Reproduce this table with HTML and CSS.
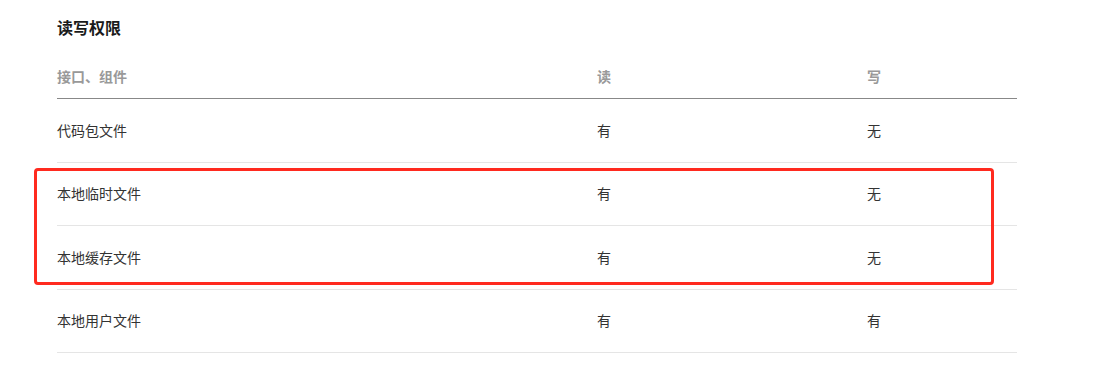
FILE: index.html
```html
<!DOCTYPE html>
<html lang="zh-CN">
<head>
<meta charset="utf-8">
<link rel="stylesheet" href="styles.css">
</head>
<body>
<div class="page">
  <h3 class="title">读写权限</h3>
  <table class="perm">
    <colgroup><col class="c1"><col class="c2"><col class="c3"></colgroup>
    <thead>
      <tr><th>接口、组件</th><th>读</th><th>写</th></tr>
    </thead>
    <tbody>
      <tr><td>代码包文件</td><td>有</td><td>无</td></tr>
      <tr><td>本地临时文件</td><td>有</td><td>无</td></tr>
      <tr><td>本地缓存文件</td><td>有</td><td>无</td></tr>
      <tr><td>本地用户文件</td><td>有</td><td>有</td></tr>
    </tbody>
  </table>
  <div class="highlight"></div>
</div>
</body>
</html>
```
FILE: styles.css
```css
html, body {
  margin: 0;
  padding: 0;
  background: #fff;
}
body {
  font-family: "Noto Sans CJK SC", "Noto Sans", sans-serif;
  color: #333;
}
.page {
  position: relative;
  padding: 16px 0 0 57px;
}
.title {
  margin: 0;
  font-size: 16px;
  line-height: 22px;
  font-weight: 700;
  color: #1a1a1a;
}
.perm {
  margin-top: 27px;
  width: 960px;
  border-collapse: collapse;
  table-layout: fixed;
}
.c1 { width: 540px; }
.c2 { width: 270px; }
.c3 { width: 150px; }
.perm th {
  text-align: left;
  font-size: 14px;
  font-weight: 700;
  color: #999;
  line-height: 22px;
  padding: 0 0 11px 0;
  border-bottom: 1px solid #888;
}
.perm td {
  font-size: 14px;
  line-height: 22px;
  height: 63.5px;
  padding: 0 0 1px 0;
  vertical-align: middle;
  border-bottom: 1px solid #e5e5e5;
  box-sizing: border-box;
}
.highlight {
  position: absolute;
  left: 34px;
  top: 168px;
  width: 960px;
  height: 117px;
  box-sizing: border-box;
  border: 3px solid #ff2a1f;
  border-radius: 4px;
}
```
